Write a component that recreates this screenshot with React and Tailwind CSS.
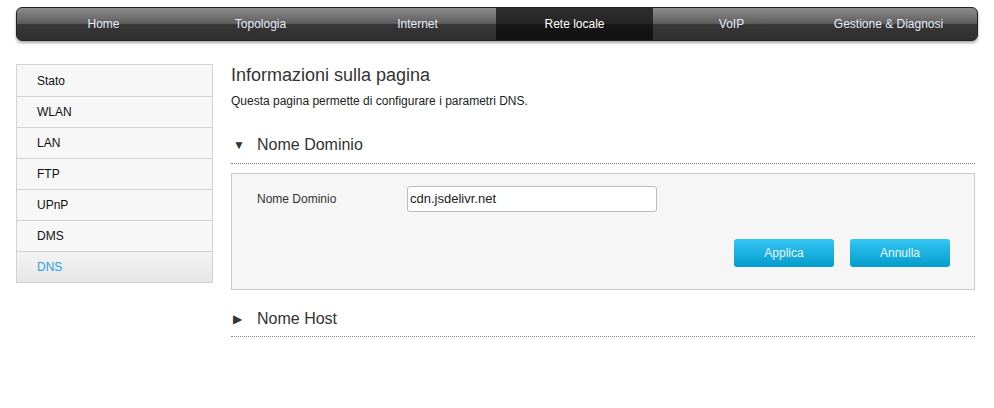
export default function App() {
  const tabs = ["Home", "Topologia", "Internet", "Rete locale", "VoIP", "Gestione & Diagnosi"];
  const side = ["Stato", "WLAN", "LAN", "FTP", "UPnP", "DMS", "DNS"];
  return (
    <div className="w-[994px] h-[408px] bg-white font-['Liberation_Sans',Arial,sans-serif] text-[#333]">
      <div className="pt-[7px] px-[16px]">
        <div className="h-[34px] rounded-[6px] border border-[#222] shadow-[0_2px_3px_rgba(0,0,0,0.35)] overflow-hidden flex px-[8px] bg-[linear-gradient(#8c8c8c_0%,#5e5e5e_48%,#363636_52%,#303030_100%)]">
          {tabs.map((t) => (
            <div
              key={t}
              className={
                "w-[157px] flex items-center justify-center text-[12px] pb-[1px] " +
                (t === "Rete locale"
                  ? "bg-[linear-gradient(#2e2e2e_0%,#262626_48%,#161616_52%,#111_100%)] text-white"
                  : "text-[#e4ecf5]")
              }
            >
              {t}
            </div>
          ))}
        </div>
      </div>
      <div className="flex mt-[23px] px-[16px]">
        <div className="w-[197px] shrink-0 border border-[#d2d2d2] bg-[#f7f7f7] self-start">
          {side.map((s, i) => (
            <div
              key={s}
              className={
                "h-[31px] flex items-center pl-[20px] text-[12px] " +
                (i > 0 ? "border-t border-[#d2d2d2] " : "") +
                (s === "DNS"
                  ? "text-[#2aa1d8] bg-[linear-gradient(#f4f4f4,#e6e6e6)]"
                  : "text-[#111]")
              }
            >
              {s}
            </div>
          ))}
        </div>
        <div className="flex-1 ml-[18px] mr-[3px]">
          <div className="text-[18px] leading-[22px] text-[#333]">Informazioni sulla pagina</div>
          <div className="text-[12px] leading-[14px] mt-[8px] text-[#222]">Questa pagina permette di configurare i parametri DNS.</div>
          <div className="flex items-center mt-[25px] h-[24px]">
            <span className="text-[12px] text-[#333] ml-[2px] w-[24px]">▼</span>
            <span className="text-[16px] text-[#333]">Nome Dominio</span>
          </div>
          <div className="border-b border-dotted border-[#888] mt-[6px]"></div>
          <div className="mt-[9px] h-[117px] border border-[#ccc] bg-[#f6f6f6]">
            <div className="flex items-center mt-[12px]">
              <span className="text-[12px] text-[#333] ml-[25px] w-[150px]">Nome Dominio</span>
              <div className="w-[250px] h-[26px] border border-[#bbb] rounded-[3px] bg-white flex items-center pl-[2px] text-[13px] text-[#222]">
                cdn.jsdelivr.net
              </div>
            </div>
            <div className="flex justify-end mt-[27px] mr-[24px] gap-[16px]">
              <button className="w-[100px] h-[28px] rounded-[3px] bg-[linear-gradient(#34c6f5,#039ccc)] text-[12px] text-[#e8f8ff]">Applica</button>
              <button className="w-[100px] h-[28px] rounded-[3px] bg-[linear-gradient(#34c6f5,#039ccc)] text-[12px] text-[#e8f8ff]">Annulla</button>
            </div>
          </div>
          <div className="flex items-center mt-[17px] h-[24px]">
            <span className="text-[12px] text-[#333] ml-[2px] w-[24px]">▶</span>
            <span className="text-[16px] text-[#333]">Nome Host</span>
          </div>
          <div className="border-b border-dotted border-[#888] mt-[5px]"></div>
        </div>
      </div>
    </div>
  );
}
